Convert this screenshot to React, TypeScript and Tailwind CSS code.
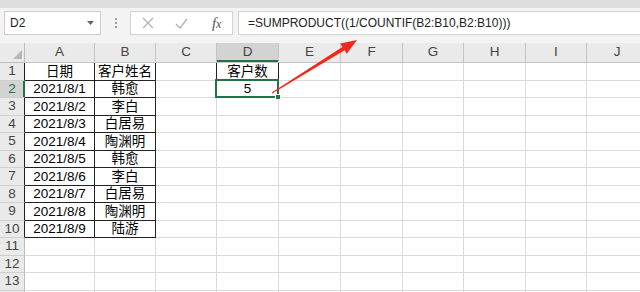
import React from "react";

const cols = [
  { l: "A", w: "w-[70px]" },
  { l: "B", w: "w-[61px]" },
  { l: "C", w: "w-[61px]" },
  { l: "D", w: "w-[62px]" },
  { l: "E", w: "w-[62px]" },
  { l: "F", w: "w-[62px]" },
  { l: "G", w: "w-[61px]" },
  { l: "H", w: "w-[62px]" },
  { l: "I", w: "w-[61px]" },
  { l: "J", w: "w-[61px]" },
];

const names = ["韩愈", "李白", "白居易", "陶渊明", "韩愈", "李白", "白居易", "陶渊明", "陆游"];

const cellText = (r: number, c: number): string => {
  if (r === 1) return c === 0 ? "日期" : c === 1 ? "客户姓名" : c === 3 ? "客户数" : "";
  if (r >= 2 && r <= 10) {
    if (c === 0) return `2021/8/${r - 1}`;
    if (c === 1) return names[r - 2];
  }
  if (r === 2 && c === 3) return "5";
  return "";
};

const inTable = (r: number, c: number) =>
  (c >= 0 && c <= 1 && r >= 1 && r <= 10) || (c === 3 && r >= 1 && r <= 2);

const Cell: React.FC<{ r: number; c: number }> = ({ r, c }) => {
  const right = inTable(r, c) || inTable(r, c + 1);
  const bottom = inTable(r, c) || inTable(r + 1, c);
  const selected = r === 2 && c === 3;
  return (
    <div
      className={`${cols[c].w} relative shrink-0 h-full flex items-center justify-center border-r border-b ${
        right ? "border-r-[#222]" : "border-r-[#dadada]"
      } ${bottom ? "border-b-[#222]" : "border-b-[#dadada]"}`}
    >
      <span className="leading-none text-[13.5px] text-black">{cellText(r, c)}</span>
      {selected && (
        <div className="absolute -left-[2px] -top-[2px] w-[calc(100%+3px)] h-[calc(100%+3px)] border-2 border-[#217346] z-10">
          <div className="absolute -right-[4px] -bottom-[4px] w-[6px] h-[6px] bg-[#217346] border border-white" />
        </div>
      )}
    </div>
  );
};

const Row: React.FC<{ r: number }> = ({ r }) => {
  const sel = r === 2;
  return (
    <div className="flex h-[17.5px] shrink-0">
      <div
        className={`w-[25px] shrink-0 h-full flex items-center justify-center border-r border-b border-b-[#cfcfcf] text-[13.5px] ${
          sel
            ? "bg-[#d3d3d3] text-[#217346] border-r-[#217346] shadow-[inset_-1px_0_0_#217346]"
            : inTable(r, 0)
            ? "bg-[#eaeaea] text-[#444] border-r-[#222]"
            : "bg-[#eaeaea] text-[#444] border-r-[#bdbdbd]"
        }`}
      >
        {r}
      </div>
      {cols.map((_, c) => (
        <Cell key={c} r={r} c={c} />
      ))}
    </div>
  );
};

export default function App() {
  const rows = Array.from({ length: 13 }, (_, i) => i + 1);
  return (
    <div className="relative w-[640px] h-[292px] overflow-hidden bg-white font-['Liberation_Sans','Noto_Sans_CJK_SC',sans-serif]">
      <div className="h-[8px] bg-[#dedede]" />
      <div className="h-[35px] bg-[#f3f3f3] flex items-start pt-[3px]">
        <div className="ml-[4px] w-[97px] h-[24px] bg-white border border-[#cdcdcd] flex items-center pl-[5px] pr-[6px] justify-between">
          <span className="text-[12px] text-[#222]">D2</span>
          <svg width="7" height="4" viewBox="0 0 7 4">
            <path d="M0 0 H7 L3.5 4 Z" fill="#666" />
          </svg>
        </div>
        <div className="w-[29px] h-[24px] flex flex-col items-center justify-center gap-[2px]">
          <div className="w-[2px] h-[2px] bg-[#9a9a9a]" />
          <div className="w-[2px] h-[2px] bg-[#9a9a9a]" />
          <div className="w-[2px] h-[2px] bg-[#9a9a9a]" />
        </div>
        <div className="w-[103px] h-[24px] bg-white border border-[#d4d4d4] flex items-center">
          <div className="w-[34px] flex justify-center">
            <svg width="12" height="12" viewBox="0 0 12 12">
              <path d="M1 1 L11 11 M11 1 L1 11" stroke="#b3b3b3" strokeWidth="1.3" />
            </svg>
          </div>
          <div className="w-[34px] flex justify-center">
            <svg width="13" height="11" viewBox="0 0 13 11">
              <path d="M1 6 L5 10 L12 1" stroke="#b3b3b3" strokeWidth="1.4" fill="none" />
            </svg>
          </div>
          <div className="w-[34px] flex justify-center pl-[3px]">
            <span className="font-['Liberation_Serif',serif] italic text-[15px] text-[#555] leading-none">
              f<span className="text-[12px]">x</span>
            </span>
          </div>
        </div>
        <div className="ml-[5px] flex-1 -mr-px h-[24px] bg-white border border-[#d4d4d4] flex items-center pl-[9px]">
          <span className="text-[12px] text-[#222] whitespace-nowrap">=SUMPRODUCT((1/COUNTIF(B2:B10,B2:B10)))</span>
        </div>
      </div>
      <div className="flex h-[20px] bg-[#eaeaea]">
        <div className="w-[25px] shrink-0 h-full relative border-r border-b border-[#bdbdbd]">
          <svg className="absolute right-[2px] bottom-[3px]" width="9" height="9" viewBox="0 0 9 9">
            <path d="M9 0 V9 H0 Z" fill="#b7b7b7" />
          </svg>
        </div>
        {cols.map((c) => (
          <div
            key={c.l}
            className={`${c.w} shrink-0 h-full flex items-center justify-center border-r border-b border-[#c4c4c4] text-[13.5px] text-[#444] ${
              c.l === "D" ? "bg-[#d3d3d3] shadow-[inset_0_-2px_0_#217346]" : ""
            }`}
          >
            {c.l}
          </div>
        ))}
      </div>
      <div className="flex flex-col">
        {rows.map((r) => (
          <Row key={r} r={r} />
        ))}
        <div className="flex h-[4px] shrink-0">
          <div className="w-[25px] shrink-0 h-full bg-[#eaeaea] border-r border-[#bdbdbd]" />
          {cols.map((c) => (
            <div key={c.l} className={`${c.w} shrink-0 h-full border-r border-[#dadada]`} />
          ))}
        </div>
      </div>
      <svg className="absolute left-0 top-0 pointer-events-none z-20" width="640" height="292" viewBox="0 0 640 292">
        <polygon
          points="272.3,93.5 271.7,92.5 342.4,46.9 340.3,43.5 357,40 346.7,53.7 344.6,50.3"
          fill="#f2281c"
        />
      </svg>
    </div>
  );
}
